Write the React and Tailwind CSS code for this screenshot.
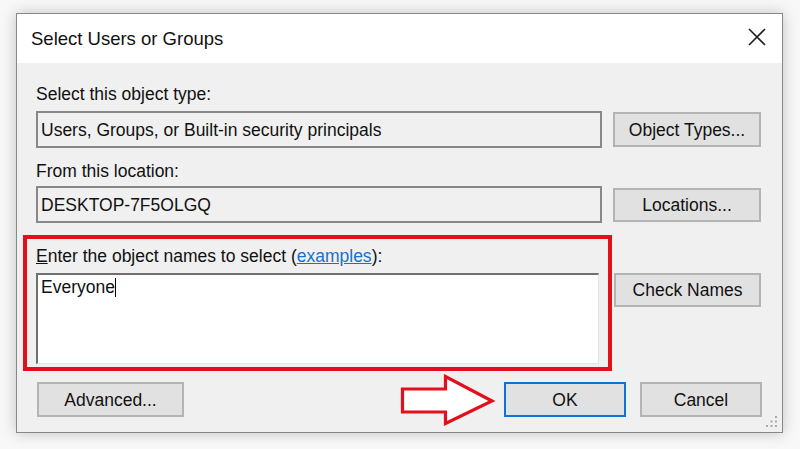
import React from 'react';

const font = { fontFamily: '"Liberation Sans", Arial, sans-serif' };

const Button = ({ children, className = '', focused = false }) => (
  <div
    className={`flex items-center justify-center bg-[#e1e1e1] border-2 text-[17.5px] leading-[20px] text-[#111] ${
      focused ? 'border-[#0a74d6]' : 'border-[#b4b4b4]'
    } ${className}`}
  >
    {children}
  </div>
);

const ReadOnlyBox = ({ children }) => (
  <div className="flex items-center w-[566px] h-[37px] border-2 border-[#888] bg-[#f0f0f0] pl-[3px] text-[17.5px] leading-[20px] text-[#111]">
    {children}
  </div>
);

const App = () => {
  return (
    <div className="w-[800px] h-[449px] overflow-hidden bg-[#f8f8f8] pt-[13px] pl-[16px]" style={font}>
      <div className="relative flex flex-col w-[767px] h-[420px] border border-[#888] bg-[#f0f0f0] shadow-[0_0_14px_rgba(0,0,0,0.22)]">
        {/* Title bar */}
        <div className="flex items-start justify-between h-[49px] bg-white pt-[14px] pl-[14px] pr-[16px]">
          <span className="text-[18.5px] leading-[22px] text-[#111]">Select Users or Groups</span>
          <svg width="18" height="18" viewBox="0 0 18 18">
            <path d="M1 1 L17 17 M17 1 L1 17" stroke="#222" strokeWidth="1.6" fill="none" />
          </svg>
        </div>

        {/* Body */}
        <div className="flex flex-col pt-[21px] pl-[19px] pr-[20px] text-[17.5px] leading-[20px] text-[#111]">
          <div>Select this object type:</div>
          <div className="flex items-center mt-[7px]">
            <ReadOnlyBox>Users, Groups, or Built-in security principals</ReadOnlyBox>
            <Button className="ml-[11px] w-[148px] h-[35px]">Object Types...</Button>
          </div>

          <div className="mt-[13px]">From this location:</div>
          <div className="flex items-center mt-[5px]">
            <ReadOnlyBox>DESKTOP-7F5OLGQ</ReadOnlyBox>
            <Button className="ml-[11px] w-[148px] h-[34px]">Locations...</Button>
          </div>

          <div className="mt-[23px]">
            <span className="underline">E</span>nter the object names to select (
            <span className="text-[#1a6fd0] underline">examples</span>):
          </div>
          <div className="flex items-start mt-[7px]">
            <div className="w-[563px] h-[91px] bg-white border-t-2 border-l-2 border-r border-b border-t-[#707070] border-l-[#707070] border-r-[#e3e3e3] border-b-[#e3e3e3] pl-[3px] pt-[2px]">
              <div className="flex items-center">
                <span>Everyone</span>
                <span className="inline-block w-[1px] h-[19px] bg-black" />
              </div>
            </div>
            <Button className="ml-[15px] w-[147px] h-[34px]">Check Names</Button>
          </div>

          <div className="flex items-center mt-[18px]">
            <Button className="ml-[1px] w-[147px] h-[35px]">Advanced...</Button>
            <div className="flex-1" />
            <Button focused className="w-[122px] h-[35px]">OK</Button>
            <Button className="ml-[14px] w-[122px] h-[35px]">Cancel</Button>
          </div>
        </div>

        {/* Red highlight annotation */}
        <div className="absolute left-[6px] top-[221px] w-[589px] h-[136px] border-4 border-[#e3101c] pointer-events-none" />

        {/* Red arrow annotation */}
        <svg className="absolute left-[383px] top-[360px]" width="100" height="52" viewBox="0 0 100 52">
          <path
            d="M2.5 15 L45.5 15 L45.5 2.5 L92 27 L45.5 49.5 L45.5 38 L2.5 38 Z"
            fill="white"
            stroke="#e3101c"
            strokeWidth="3.2"
            strokeLinejoin="miter"
          />
        </svg>

        {/* Resize grip */}
        <svg className="absolute right-[3px] bottom-[3px]" width="14" height="14" viewBox="0 0 14 14">
          {[
            [11, 2],
            [11, 6.5],
            [6.5, 6.5],
            [11, 11],
            [6.5, 11],
            [2, 11],
          ].map(([x, y], i) => (
            <rect key={i} x={x - 1} y={y - 1} width="2" height="2" fill="#a8a8a8" />
          ))}
        </svg>
      </div>
    </div>
  );
};

export default App;
